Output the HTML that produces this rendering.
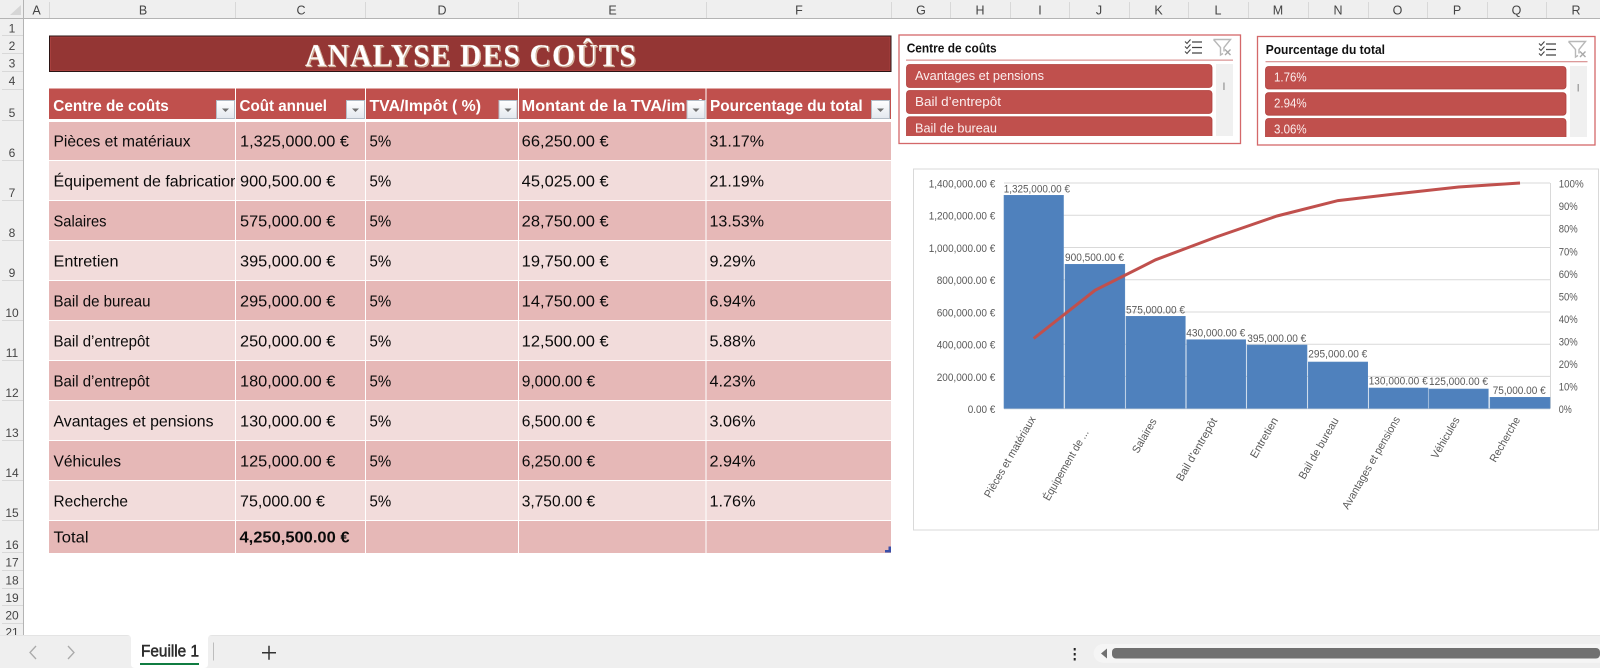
<!DOCTYPE html>
<html lang="fr"><head><meta charset="utf-8"><title>Analyse des coûts</title>
<style>
html,body{margin:0;padding:0;background:#fff;width:1600px;height:668px;overflow:hidden}
svg{display:block;font-family:"Liberation Sans",sans-serif}
.ch{font-size:12.5px;fill:#444;text-anchor:middle}
.rh{font-size:12px;fill:#444;text-anchor:middle}
.th{font-size:16px;font-weight:bold;fill:#fff}
.td{font-size:16px;fill:#0a0a0a}
.sl{font-size:13px;fill:#fbeeee}
.st{font-size:13px;font-weight:bold;fill:#111}
.ax{font-size:11px;fill:#595959}
</style></head><body>
<svg width="1600" height="668" viewBox="0 0 1600 668" xmlns="http://www.w3.org/2000/svg">
<defs>
<linearGradient id="fb" x1="0" y1="0" x2="0" y2="1"><stop offset="0" stop-color="#fff"/><stop offset="1" stop-color="#e3e8ee"/></linearGradient>
<g id="btn"><rect x="0.5" y="0.5" width="18" height="18" fill="url(#fb)" stroke="#b3bcc6"/><path d="M6 8.500h7l-3.500 3.500z" fill="#6e6e6e"/></g>
<g id="multi" fill="none" stroke="#444" stroke-width="1.100"><path d="M0 2.500l2 2 3.500-4M0 7.500l2 2 3.500-4M0 12.500l2 2 3.500-4"/><path d="M7 3h10M7 8.500h10M7 14h10" stroke-width="1.300"/></g>
<g id="clr" fill="none" stroke="#b8b8b8" stroke-width="1.400"><path d="M0.500 0.500h17l-6.500 8v4M0.500 0.500l7 8v7.500l2.500-1.500"/><path d="M12 10.500l5.500 5.500M17.500 10.500l-5.500 5.500" stroke="#a8a8a8"/></g>
<clipPath id="cB"><rect x="49" y="120" width="186" height="80"/></clipPath>
<clipPath id="cE"><rect x="519" y="88" width="186" height="32"/></clipPath>
<clipPath id="s1"><rect x="900" y="60" width="340" height="76"/></clipPath>
<clipPath id="s2"><rect x="1260" y="60" width="330" height="77"/></clipPath>
<clipPath id="r21"><rect x="0" y="620" width="24" height="15"/></clipPath>
</defs>

<!-- grid headers -->
<rect x="0" y="0" width="1600" height="18.500" fill="#efefef"/>
<rect x="0" y="0" width="23.500" height="668" fill="#efefef"/>
<rect x="0" y="18" width="1600" height="1" fill="#b4b4b4"/>
<rect x="23" y="0" width="1" height="635" fill="#b4b4b4"/>
<polygon points="21,5 21,15 10,15" fill="#d6d6d6"/>
<g fill="#d8d8d8">
<rect x="49" y="2" width="1" height="16"/><rect x="235" y="2" width="1" height="16"/><rect x="365" y="2" width="1" height="16"/><rect x="518" y="2" width="1" height="16"/><rect x="706" y="2" width="1" height="16"/><rect x="891" y="2" width="1" height="16"/><rect x="950" y="2" width="1" height="16"/><rect x="1010" y="2" width="1" height="16"/><rect x="1069" y="2" width="1" height="16"/><rect x="1129" y="2" width="1" height="16"/><rect x="1188" y="2" width="1" height="16"/><rect x="1248" y="2" width="1" height="16"/><rect x="1308" y="2" width="1" height="16"/><rect x="1368" y="2" width="1" height="16"/><rect x="1427" y="2" width="1" height="16"/><rect x="1487" y="2" width="1" height="16"/><rect x="1546" y="2" width="1" height="16"/>
<rect x="2" y="35" width="21" height="1"/><rect x="2" y="53" width="21" height="1"/><rect x="2" y="71" width="21" height="1"/><rect x="2" y="89" width="21" height="1"/><rect x="2" y="120" width="21" height="1"/><rect x="2" y="160" width="21" height="1"/><rect x="2" y="200" width="21" height="1"/><rect x="2" y="240" width="21" height="1"/><rect x="2" y="280" width="21" height="1"/><rect x="2" y="320" width="21" height="1"/><rect x="2" y="360" width="21" height="1"/><rect x="2" y="400" width="21" height="1"/><rect x="2" y="440" width="21" height="1"/><rect x="2" y="480" width="21" height="1"/><rect x="2" y="520" width="21" height="1"/><rect x="2" y="552" width="21" height="1"/><rect x="2" y="570" width="21" height="1"/><rect x="2" y="588" width="21" height="1"/><rect x="2" y="605" width="21" height="1"/><rect x="2" y="623" width="21" height="1"/>
</g>
<g>
<text class="ch" x="36.500" y="14.500">A</text><text class="ch" x="143" y="14.500">B</text><text class="ch" x="301" y="14.500">C</text><text class="ch" x="442" y="14.500">D</text><text class="ch" x="612.500" y="14.500">E</text><text class="ch" x="799" y="14.500">F</text><text class="ch" x="921" y="14.500">G</text><text class="ch" x="980" y="14.500">H</text><text class="ch" x="1040" y="14.500">I</text><text class="ch" x="1099" y="14.500">J</text><text class="ch" x="1158.500" y="14.500">K</text><text class="ch" x="1218" y="14.500">L</text><text class="ch" x="1278" y="14.500">M</text><text class="ch" x="1338" y="14.500">N</text><text class="ch" x="1397.500" y="14.500">O</text><text class="ch" x="1457" y="14.500">P</text><text class="ch" x="1516.500" y="14.500">Q</text><text class="ch" x="1576" y="14.500">R</text>
</g>
<g>
<text class="rh" x="12" y="32.500">1</text><text class="rh" x="12" y="50">2</text><text class="rh" x="12" y="67.500">3</text><text class="rh" x="12" y="85">4</text><text class="rh" x="12" y="117">5</text><text class="rh" x="12" y="157">6</text><text class="rh" x="12" y="197">7</text><text class="rh" x="12" y="237">8</text><text class="rh" x="12" y="277">9</text><text class="rh" x="12" y="317">10</text><text class="rh" x="12" y="357">11</text><text class="rh" x="12" y="397">12</text><text class="rh" x="12" y="437">13</text><text class="rh" x="12" y="477">14</text><text class="rh" x="12" y="517">15</text><text class="rh" x="12" y="549">16</text><text class="rh" x="12" y="566.500">17</text><text class="rh" x="12" y="584.500">18</text><text class="rh" x="12" y="602">19</text><text class="rh" x="12" y="619.500">20</text><text class="rh" x="12" y="636.500" clip-path="url(#r21)">21</text>
</g>

<!-- title -->
<rect x="49.500" y="36" width="841.500" height="35.500" fill="#943634" stroke="#2a1414" stroke-width="1"/>
<rect x="50.500" y="37" width="839.500" height="33.500" fill="none" stroke="#a8403e" stroke-width="1"/>
<text x="305" y="66" font-family="Liberation Serif" font-size="32" font-weight="bold" fill="#fff" stroke="#b98a78" stroke-width="0.300" letter-spacing="1.200" textLength="332" lengthAdjust="spacingAndGlyphs" style="filter:drop-shadow(1px 1px 0 #d8b7a0)">ANALYSE DES COÛTS</text>

<!-- table header -->
<g fill="#c0504d">
<rect x="49" y="88.500" width="186" height="30.500"/><rect x="236" y="88.500" width="129" height="30.500"/><rect x="366" y="88.500" width="152" height="30.500"/><rect x="519" y="88.500" width="186.500" height="30.500"/><rect x="706.500" y="88.500" width="184.500" height="30.500"/>
</g>
<text class="th" x="53.300" y="111" textLength="115.500" lengthAdjust="spacingAndGlyphs">Centre de coûts</text>
<text class="th" x="239.500" y="111" textLength="87.500" lengthAdjust="spacingAndGlyphs">Coût annuel</text>
<text class="th" x="369.500" y="111" textLength="111.500" lengthAdjust="spacingAndGlyphs">TVA/Impôt ( %)</text>
<text class="th" x="521.700" y="111" textLength="189" lengthAdjust="spacingAndGlyphs" clip-path="url(#cE)">Montant de la TVA/impôt</text>
<text class="th" x="710" y="111" textLength="152.700" lengthAdjust="spacingAndGlyphs">Pourcentage du total</text>
<use href="#btn" x="216" y="100"/><use href="#btn" x="346" y="100"/><use href="#btn" x="498.500" y="100"/><use href="#btn" x="686.500" y="100"/><use href="#btn" x="871" y="100"/>

<!-- table rows -->
<g fill="#e6b8b7">
<rect x="49" y="122" width="186" height="38"/><rect x="236" y="122" width="129" height="38"/><rect x="366" y="122" width="152" height="38"/><rect x="519" y="122" width="186.500" height="38"/><rect x="706.500" y="122" width="184.500" height="38"/>
<rect x="49" y="201" width="186" height="39"/><rect x="236" y="201" width="129" height="39"/><rect x="366" y="201" width="152" height="39"/><rect x="519" y="201" width="186.500" height="39"/><rect x="706.500" y="201" width="184.500" height="39"/>
<rect x="49" y="281" width="186" height="39"/><rect x="236" y="281" width="129" height="39"/><rect x="366" y="281" width="152" height="39"/><rect x="519" y="281" width="186.500" height="39"/><rect x="706.500" y="281" width="184.500" height="39"/>
<rect x="49" y="361" width="186" height="39"/><rect x="236" y="361" width="129" height="39"/><rect x="366" y="361" width="152" height="39"/><rect x="519" y="361" width="186.500" height="39"/><rect x="706.500" y="361" width="184.500" height="39"/>
<rect x="49" y="441" width="186" height="39"/><rect x="236" y="441" width="129" height="39"/><rect x="366" y="441" width="152" height="39"/><rect x="519" y="441" width="186.500" height="39"/><rect x="706.500" y="441" width="184.500" height="39"/>
<rect x="49" y="521" width="186" height="32"/><rect x="236" y="521" width="129" height="32"/><rect x="366" y="521" width="152" height="32"/><rect x="519" y="521" width="186.500" height="32"/><rect x="706.500" y="521" width="184.500" height="32"/>
</g>
<g fill="#f2dcdb">
<rect x="49" y="161" width="186" height="39"/><rect x="236" y="161" width="129" height="39"/><rect x="366" y="161" width="152" height="39"/><rect x="519" y="161" width="186.500" height="39"/><rect x="706.500" y="161" width="184.500" height="39"/>
<rect x="49" y="241" width="186" height="39"/><rect x="236" y="241" width="129" height="39"/><rect x="366" y="241" width="152" height="39"/><rect x="519" y="241" width="186.500" height="39"/><rect x="706.500" y="241" width="184.500" height="39"/>
<rect x="49" y="321" width="186" height="39"/><rect x="236" y="321" width="129" height="39"/><rect x="366" y="321" width="152" height="39"/><rect x="519" y="321" width="186.500" height="39"/><rect x="706.500" y="321" width="184.500" height="39"/>
<rect x="49" y="401" width="186" height="39"/><rect x="236" y="401" width="129" height="39"/><rect x="366" y="401" width="152" height="39"/><rect x="519" y="401" width="186.500" height="39"/><rect x="706.500" y="401" width="184.500" height="39"/>
<rect x="49" y="481" width="186" height="39"/><rect x="236" y="481" width="129" height="39"/><rect x="366" y="481" width="152" height="39"/><rect x="519" y="481" width="186.500" height="39"/><rect x="706.500" y="481" width="184.500" height="39"/>
</g>
<path d="M885 552.500h6v-6h-2.500v3.500h-3.500z" fill="#3a4fa8"/>

<!-- row 6 -->
<text class="td" x="53.500" y="146.700" textLength="137" lengthAdjust="spacingAndGlyphs">Pièces et matériaux</text>
<text class="td" x="240" y="146.700" textLength="109" lengthAdjust="spacingAndGlyphs">1,325,000.00 €</text>
<text class="td" x="369.500" y="146.700" textLength="21.700" lengthAdjust="spacingAndGlyphs">5%</text>
<text class="td" x="521.700" y="146.700" textLength="87" lengthAdjust="spacingAndGlyphs">66,250.00 €</text>
<text class="td" x="709.500" y="146.700" textLength="54.500" lengthAdjust="spacingAndGlyphs">31.17%</text>
<!-- row 7 -->
<text class="td" x="53.500" y="186.700" textLength="185.500" lengthAdjust="spacingAndGlyphs" clip-path="url(#cB)">Équipement de fabrication</text>
<text class="td" x="240" y="186.700" textLength="95.300" lengthAdjust="spacingAndGlyphs">900,500.00 €</text>
<text class="td" x="369.500" y="186.700" textLength="21.700" lengthAdjust="spacingAndGlyphs">5%</text>
<text class="td" x="521.700" y="186.700" textLength="87" lengthAdjust="spacingAndGlyphs">45,025.00 €</text>
<text class="td" x="709.500" y="186.700" textLength="54.500" lengthAdjust="spacingAndGlyphs">21.19%</text>
<!-- row 8 -->
<text class="td" x="53.500" y="226.700" textLength="53" lengthAdjust="spacingAndGlyphs">Salaires</text>
<text class="td" x="240" y="226.700" textLength="95.300" lengthAdjust="spacingAndGlyphs">575,000.00 €</text>
<text class="td" x="369.500" y="226.700" textLength="21.700" lengthAdjust="spacingAndGlyphs">5%</text>
<text class="td" x="521.700" y="226.700" textLength="87" lengthAdjust="spacingAndGlyphs">28,750.00 €</text>
<text class="td" x="709.500" y="226.700" textLength="54.500" lengthAdjust="spacingAndGlyphs">13.53%</text>
<!-- row 9 -->
<text class="td" x="53.500" y="266.700" textLength="65" lengthAdjust="spacingAndGlyphs">Entretien</text>
<text class="td" x="240" y="266.700" textLength="95.300" lengthAdjust="spacingAndGlyphs">395,000.00 €</text>
<text class="td" x="369.500" y="266.700" textLength="21.700" lengthAdjust="spacingAndGlyphs">5%</text>
<text class="td" x="521.700" y="266.700" textLength="87" lengthAdjust="spacingAndGlyphs">19,750.00 €</text>
<text class="td" x="709.500" y="266.700" textLength="46" lengthAdjust="spacingAndGlyphs">9.29%</text>
<!-- row 10 -->
<text class="td" x="53.500" y="306.700" textLength="97" lengthAdjust="spacingAndGlyphs">Bail de bureau</text>
<text class="td" x="240" y="306.700" textLength="95.300" lengthAdjust="spacingAndGlyphs">295,000.00 €</text>
<text class="td" x="369.500" y="306.700" textLength="21.700" lengthAdjust="spacingAndGlyphs">5%</text>
<text class="td" x="521.700" y="306.700" textLength="87" lengthAdjust="spacingAndGlyphs">14,750.00 €</text>
<text class="td" x="709.500" y="306.700" textLength="46" lengthAdjust="spacingAndGlyphs">6.94%</text>
<!-- row 11 -->
<text class="td" x="53.500" y="346.700" textLength="96" lengthAdjust="spacingAndGlyphs">Bail d’entrepôt</text>
<text class="td" x="240" y="346.700" textLength="95.300" lengthAdjust="spacingAndGlyphs">250,000.00 €</text>
<text class="td" x="369.500" y="346.700" textLength="21.700" lengthAdjust="spacingAndGlyphs">5%</text>
<text class="td" x="521.700" y="346.700" textLength="87" lengthAdjust="spacingAndGlyphs">12,500.00 €</text>
<text class="td" x="709.500" y="346.700" textLength="46" lengthAdjust="spacingAndGlyphs">5.88%</text>
<!-- row 12 -->
<text class="td" x="53.500" y="386.700" textLength="96" lengthAdjust="spacingAndGlyphs">Bail d’entrepôt</text>
<text class="td" x="240" y="386.700" textLength="95.300" lengthAdjust="spacingAndGlyphs">180,000.00 €</text>
<text class="td" x="369.500" y="386.700" textLength="21.700" lengthAdjust="spacingAndGlyphs">5%</text>
<text class="td" x="521.700" y="386.700" textLength="73.500" lengthAdjust="spacingAndGlyphs">9,000.00 €</text>
<text class="td" x="709.500" y="386.700" textLength="46" lengthAdjust="spacingAndGlyphs">4.23%</text>
<!-- row 13 -->
<text class="td" x="53.500" y="426.700" textLength="160" lengthAdjust="spacingAndGlyphs">Avantages et pensions</text>
<text class="td" x="240" y="426.700" textLength="95.300" lengthAdjust="spacingAndGlyphs">130,000.00 €</text>
<text class="td" x="369.500" y="426.700" textLength="21.700" lengthAdjust="spacingAndGlyphs">5%</text>
<text class="td" x="521.700" y="426.700" textLength="73.500" lengthAdjust="spacingAndGlyphs">6,500.00 €</text>
<text class="td" x="709.500" y="426.700" textLength="46" lengthAdjust="spacingAndGlyphs">3.06%</text>
<!-- row 14 -->
<text class="td" x="53.500" y="466.700" textLength="67.500" lengthAdjust="spacingAndGlyphs">Véhicules</text>
<text class="td" x="240" y="466.700" textLength="95.300" lengthAdjust="spacingAndGlyphs">125,000.00 €</text>
<text class="td" x="369.500" y="466.700" textLength="21.700" lengthAdjust="spacingAndGlyphs">5%</text>
<text class="td" x="521.700" y="466.700" textLength="73.500" lengthAdjust="spacingAndGlyphs">6,250.00 €</text>
<text class="td" x="709.500" y="466.700" textLength="46" lengthAdjust="spacingAndGlyphs">2.94%</text>
<!-- row 15 -->
<text class="td" x="53.500" y="506.700" textLength="74.500" lengthAdjust="spacingAndGlyphs">Recherche</text>
<text class="td" x="240" y="506.700" textLength="85" lengthAdjust="spacingAndGlyphs">75,000.00 €</text>
<text class="td" x="369.500" y="506.700" textLength="21.700" lengthAdjust="spacingAndGlyphs">5%</text>
<text class="td" x="521.700" y="506.700" textLength="73.500" lengthAdjust="spacingAndGlyphs">3,750.00 €</text>
<text class="td" x="709.500" y="506.700" textLength="46" lengthAdjust="spacingAndGlyphs">1.76%</text>
<!-- row 16 -->
<text class="td" x="53.500" y="542.700" textLength="35" lengthAdjust="spacingAndGlyphs">Total</text>
<text class="td" x="239.500" y="542.700" font-weight="bold" textLength="110" lengthAdjust="spacingAndGlyphs">4,250,500.00 €</text>

<!-- slicer 1 -->
<rect x="899" y="35" width="341.500" height="108.500" fill="#fff" stroke="#d4686a" stroke-width="1.300"/>
<text class="st" x="906.700" y="52.300" textLength="90" lengthAdjust="spacingAndGlyphs">Centre de coûts</text>
<use href="#multi" x="1185" y="39"/><use href="#clr" x="1213" y="39"/>
<rect x="906" y="59.500" width="327" height="1.300" fill="#dc9a9a"/>
<rect x="1216" y="64" width="17" height="72" fill="#f0f0f0"/><rect x="1223.200" y="82.500" width="1.500" height="7.500" fill="#a6a6a6"/>
<g clip-path="url(#s1)" fill="#c0504d" stroke="#b0403e" stroke-width="0.800">
<rect x="906.500" y="64.500" width="305.500" height="23" rx="3"/><rect x="906.500" y="90.500" width="305.500" height="23" rx="3"/><rect x="906.500" y="116.800" width="305.500" height="23" rx="3"/>
</g>
<text class="sl" x="915" y="80" textLength="129" lengthAdjust="spacingAndGlyphs">Avantages et pensions</text>
<text class="sl" x="915" y="106" textLength="86" lengthAdjust="spacingAndGlyphs">Bail d’entrepôt</text>
<text class="sl" x="915" y="132.300" textLength="82" lengthAdjust="spacingAndGlyphs" clip-path="url(#s1)">Bail de bureau</text>

<!-- slicer 2 -->
<rect x="1257.500" y="36.500" width="337.500" height="108.500" fill="#fff" stroke="#d4686a" stroke-width="1.300"/>
<text class="st" x="1265.700" y="54" textLength="119.300" lengthAdjust="spacingAndGlyphs">Pourcentage du total</text>
<use href="#multi" x="1539" y="41"/><use href="#clr" x="1568" y="41"/>
<rect x="1265.500" y="61" width="322" height="1.300" fill="#dc9a9a"/>
<rect x="1570" y="66" width="17" height="71" fill="#f0f0f0"/><rect x="1577.500" y="84" width="1.500" height="7.500" fill="#a6a6a6"/>
<g clip-path="url(#s2)" fill="#c0504d" stroke="#b0403e" stroke-width="0.800">
<rect x="1265.500" y="66.500" width="300.500" height="22.500" rx="3"/><rect x="1265.500" y="92.700" width="300.500" height="22.500" rx="3"/><rect x="1265.500" y="118.500" width="300.500" height="23" rx="3"/>
</g>
<text class="sl" x="1274" y="81.700" textLength="32.700" lengthAdjust="spacingAndGlyphs">1.76%</text>
<text class="sl" x="1274" y="107.700" textLength="32.700" lengthAdjust="spacingAndGlyphs">2.94%</text>
<text class="sl" x="1274" y="133.700" textLength="32.700" lengthAdjust="spacingAndGlyphs" clip-path="url(#s2)">3.06%</text>

<!-- chart -->
<rect x="913.500" y="169" width="685" height="361" fill="#fff" stroke="#d9d9d9" stroke-width="1"/>
<g stroke="#d9d9d9" stroke-width="1">
<path d="M1004 183h546M1004 215.200h546M1004 247.500h546M1004 279.700h546M1004 312h546M1004 344.200h546M1004 376.400h546"/>
<path d="M1550.500 183v225.500"/>
<path d="M1004 408.700h546" stroke="#bfc9d6"/>
</g>
<g fill="#4f81bd" stroke="#5b8ac2" stroke-width="0.600">
<rect x="1004" y="195.300" width="59.500" height="213"/>
<rect x="1065" y="264.300" width="59.800" height="144"/>
<rect x="1126" y="316.300" width="59.300" height="92"/>
<rect x="1186.700" y="339.700" width="59" height="68.600"/>
<rect x="1247" y="345" width="60" height="63.300"/>
<rect x="1308.300" y="362" width="59.400" height="46.300"/>
<rect x="1369" y="388" width="59" height="20.300"/>
<rect x="1429" y="389" width="59.300" height="19.300"/>
<rect x="1490" y="397.300" width="60" height="11"/>
</g>
<polyline points="1033.700,338.500 1095,290.300 1155.600,259.800 1216.200,237 1277,216 1338,200.600 1398.500,193.600 1458.700,187 1520,183" fill="none" stroke="#c0504d" stroke-width="3"/>
<g>
<text class="ax" x="1003.700" y="192.300" textLength="66.300" lengthAdjust="spacingAndGlyphs">1,325,000.00 €</text>
<text class="ax" x="1065" y="261" textLength="59" lengthAdjust="spacingAndGlyphs">900,500.00 €</text>
<text class="ax" x="1126" y="313.300" textLength="59" lengthAdjust="spacingAndGlyphs">575,000.00 €</text>
<text class="ax" x="1186.300" y="336.700" textLength="59" lengthAdjust="spacingAndGlyphs">430,000.00 €</text>
<text class="ax" x="1247.300" y="342" textLength="59" lengthAdjust="spacingAndGlyphs">395,000.00 €</text>
<text class="ax" x="1308.300" y="357.300" textLength="59" lengthAdjust="spacingAndGlyphs">295,000.00 €</text>
<text class="ax" x="1368.700" y="384.300" textLength="59" lengthAdjust="spacingAndGlyphs">130,000.00 €</text>
<text class="ax" x="1429" y="385" textLength="59" lengthAdjust="spacingAndGlyphs">125,000.00 €</text>
<text class="ax" x="1492.700" y="394" textLength="53" lengthAdjust="spacingAndGlyphs">75,000.00 €</text>
<text class="ax" x="928.700" y="187.700" textLength="66.600" lengthAdjust="spacingAndGlyphs">1,400,000.00 €</text>
<text class="ax" x="928.700" y="219.700" textLength="66.600" lengthAdjust="spacingAndGlyphs">1,200,000.00 €</text>
<text class="ax" x="928.700" y="252" textLength="66.600" lengthAdjust="spacingAndGlyphs">1,000,000.00 €</text>
<text class="ax" x="936.700" y="284" textLength="58.600" lengthAdjust="spacingAndGlyphs">800,000.00 €</text>
<text class="ax" x="936.700" y="316.500" textLength="58.600" lengthAdjust="spacingAndGlyphs">600,000.00 €</text>
<text class="ax" x="936.700" y="348.700" textLength="58.600" lengthAdjust="spacingAndGlyphs">400,000.00 €</text>
<text class="ax" x="936.700" y="380.800" textLength="58.600" lengthAdjust="spacingAndGlyphs">200,000.00 €</text>
<text class="ax" x="967.700" y="413" textLength="27.600" lengthAdjust="spacingAndGlyphs">0.00 €</text>
<text class="ax" x="1558.700" y="187.700" textLength="25" lengthAdjust="spacingAndGlyphs">100%</text>
<text class="ax" x="1558.700" y="210.200" textLength="19" lengthAdjust="spacingAndGlyphs">90%</text>
<text class="ax" x="1558.700" y="232.700" textLength="19" lengthAdjust="spacingAndGlyphs">80%</text>
<text class="ax" x="1558.700" y="255.300" textLength="19" lengthAdjust="spacingAndGlyphs">70%</text>
<text class="ax" x="1558.700" y="277.800" textLength="19" lengthAdjust="spacingAndGlyphs">60%</text>
<text class="ax" x="1558.700" y="300.400" textLength="19" lengthAdjust="spacingAndGlyphs">50%</text>
<text class="ax" x="1558.700" y="322.900" textLength="19" lengthAdjust="spacingAndGlyphs">40%</text>
<text class="ax" x="1558.700" y="345.400" textLength="19" lengthAdjust="spacingAndGlyphs">30%</text>
<text class="ax" x="1558.700" y="368" textLength="19" lengthAdjust="spacingAndGlyphs">20%</text>
<text class="ax" x="1558.700" y="390.500" textLength="19" lengthAdjust="spacingAndGlyphs">10%</text>
<text class="ax" x="1558.700" y="413" textLength="13" lengthAdjust="spacingAndGlyphs">0%</text>
<text class="ax" transform="translate(990 498.500) rotate(-60)" textLength="92" lengthAdjust="spacingAndGlyphs">Pièces et matériaux</text>
<text class="ax" transform="translate(1049 501.500) rotate(-60)" textLength="80" lengthAdjust="spacingAndGlyphs">Équipement de ...</text>
<text class="ax" transform="translate(1138 454) rotate(-60)" textLength="38" lengthAdjust="spacingAndGlyphs">Salaires</text>
<text class="ax" transform="translate(1182 482) rotate(-60)" textLength="71" lengthAdjust="spacingAndGlyphs">Bail d’entrepôt</text>
<text class="ax" transform="translate(1256 459) rotate(-60)" textLength="45" lengthAdjust="spacingAndGlyphs">Entretien</text>
<text class="ax" transform="translate(1304.500 480) rotate(-60)" textLength="69" lengthAdjust="spacingAndGlyphs">Bail de bureau</text>
<text class="ax" transform="translate(1348 510) rotate(-60)" textLength="105" lengthAdjust="spacingAndGlyphs">Avantages et pensions</text>
<text class="ax" transform="translate(1437 459.500) rotate(-60)" textLength="46" lengthAdjust="spacingAndGlyphs">Véhicules</text>
<text class="ax" transform="translate(1495.500 463) rotate(-60)" textLength="50" lengthAdjust="spacingAndGlyphs">Recherche</text>
</g>

<!-- bottom tab bar -->
<rect x="0" y="635" width="1600" height="33" fill="#efefef"/>
<rect x="0" y="635" width="1600" height="0.800" fill="#e2e2e2"/>
<path d="M127 635q4 0 4 4v25q0 4 4 4h69q4 0 4-4v-25q0-4 4-4z" fill="#fff"/>
<path d="M36 646l-6 6.500 6 6.500M68 646l6 6.500-6 6.500" fill="none" stroke="#aaa" stroke-width="1.300"/>
<text x="141" y="656.700" font-size="16.500" fill="#2e2e2e" stroke="#2e2e2e" stroke-width="0.550" textLength="58" lengthAdjust="spacingAndGlyphs">Feuille 1</text>
<rect x="140" y="663" width="59" height="2" fill="#107c41"/>
<rect x="213" y="642.500" width="1" height="18" fill="#bdbdbd"/>
<path d="M262 652.700h14M269 645.700v14" stroke="#333" stroke-width="1.500" fill="none"/>
<g fill="#222"><rect x="1073.700" y="648" width="2" height="2.500"/><rect x="1073.700" y="653" width="2" height="2.500"/><rect x="1073.700" y="658" width="2" height="2.500"/></g>
<path d="M1103 644h497v18.700h-497a9.300 9.300 0 0 1 0-18.700z" fill="#f5f5f5"/>
<path d="M1107 648.500v10l-6-5z" fill="#707070"/>
<rect x="1112" y="648" width="488" height="10.500" rx="4" fill="#707070"/>
</svg>
</body></html>
